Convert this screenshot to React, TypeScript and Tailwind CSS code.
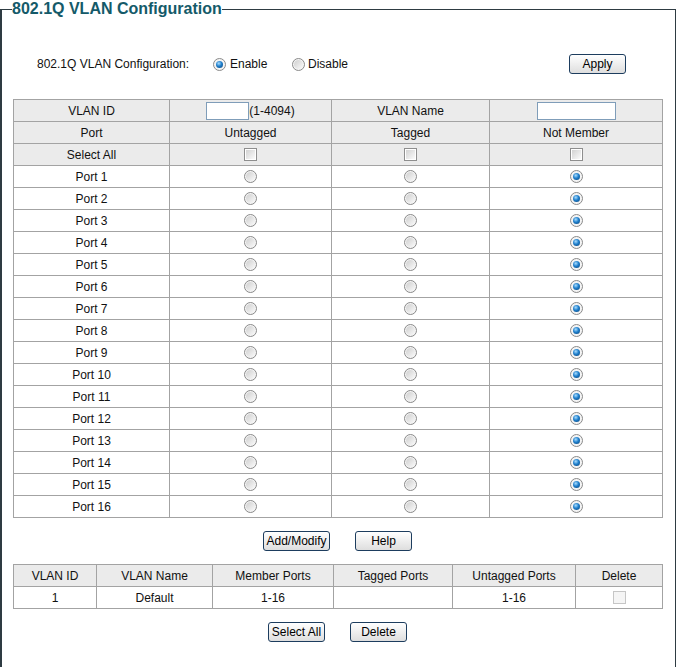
import React from 'react';

const ports = Array.from({ length: 16 }, (_, i) => `Port ${i + 1}`);

const Radio = ({ checked }: { checked?: boolean }) => (
  <span className="mx-auto flex h-[13px] w-[13px] shrink-0 items-center justify-center rounded-full border border-[#8a8a8a] bg-[#f4f4f4]">
    {checked ? (
      <span className="h-[7px] w-[7px] rounded-full bg-[radial-gradient(circle_at_40%_35%,#a9ddff_0%,#1f7fcc_45%,#083f73_100%)]" />
    ) : (
      <span className="h-[9px] w-[9px] rounded-full bg-gradient-to-br from-[#cfcfcf] to-[#fafafa]" />
    )}
  </span>
);

const Checkbox = ({ faint }: { faint?: boolean }) =>
  faint ? (
    <span className="mx-auto block h-[13px] w-[13px] border border-[#c6c6c6] bg-[#f5f5f5]" />
  ) : (
    <span className="mx-auto flex h-[13px] w-[13px] border border-[#8e8e8e] bg-white p-px">
      <span className="h-full w-full bg-gradient-to-br from-[#d2d2d2] to-[#fbfbfb]" />
    </span>
  );

const Btn = ({ children, className }: { children: React.ReactNode; className: string }) => (
  <button
    className={`h-[20px] rounded-[3px] border border-[#1d3d5e] bg-gradient-to-b from-white to-[#dedede] text-[12px] leading-none text-black ${className}`}
  >
    {children}
  </button>
);

const cell = 'border border-[#a3a3a3] p-0 text-center align-middle';

export default function App() {
  return (
    <div className="min-h-screen bg-white font-['Liberation_Sans',Arial,sans-serif] text-[12px] text-[#111]">
      <fieldset className="w-[676px] border-t border-r border-b border-l-2 border-[#2e3b42] pl-[10px] pb-[40px]">
        <legend className="p-0 text-[16px] font-bold leading-[18px] text-[#145a69]">802.1Q VLAN Configuration</legend>

        <div className="ml-px w-[649px]">
          <div className="mt-[36px] flex h-[20px] items-center pl-[24px]">
            <div className="w-[176px]">802.1Q VLAN Configuration:</div>
            <div className="flex w-[79px] items-center gap-[4px]">
              <span className="flex">
                <Radio checked />
              </span>
              <span>Enable</span>
            </div>
            <div className="flex items-center gap-[3px]">
              <span className="flex">
                <Radio />
              </span>
              <span>Disable</span>
            </div>
            <Btn className="ml-auto mr-[36px] w-[57px]">Apply</Btn>
          </div>

          <table className="mt-[25px] w-[649px] table-fixed border-collapse">
            <colgroup>
              <col className="w-[156px]" />
              <col className="w-[162px]" />
              <col className="w-[158px]" />
              <col className="w-[173px]" />
            </colgroup>
            <tbody>
              <tr className="h-[22px] bg-[#ebebeb]">
                <td className={cell}>VLAN ID</td>
                <td className={cell}>
                  <span className="inline-flex items-center">
                    <input className="h-[18px] w-[43px] border border-[#7f9db9] bg-white px-1 text-[12px] outline-none" />
                    <span>(1-4094)</span>
                  </span>
                </td>
                <td className={cell}>VLAN Name</td>
                <td className={cell}>
                  <input className="h-[18px] w-[79px] border border-[#7f9db9] bg-white px-1 align-middle text-[12px] outline-none" />
                </td>
              </tr>
              <tr className="h-[22px] bg-[#ebebeb]">
                <td className={cell}>Port</td>
                <td className={cell}>Untagged</td>
                <td className={cell}>Tagged</td>
                <td className={cell}>Not Member</td>
              </tr>
              <tr className="h-[22px] bg-[#ebebeb]">
                <td className={cell}>Select All</td>
                <td className={cell}>
                  <Checkbox />
                </td>
                <td className={cell}>
                  <Checkbox />
                </td>
                <td className={cell}>
                  <Checkbox />
                </td>
              </tr>
              {ports.map((p) => (
                <tr key={p} className="h-[22px] bg-white">
                  <td className={cell}>{p}</td>
                  <td className={cell}>
                    <Radio />
                  </td>
                  <td className={cell}>
                    <Radio />
                  </td>
                  <td className={cell}>
                    <Radio checked />
                  </td>
                </tr>
              ))}
            </tbody>
          </table>

          <div className="mt-[13px] flex justify-center gap-[25px]">
            <Btn className="w-[67px]">Add/Modify</Btn>
            <Btn className="w-[57px]">Help</Btn>
          </div>

          <table className="mt-[13px] w-[649px] table-fixed border-collapse">
            <colgroup>
              <col className="w-[83px]" />
              <col className="w-[116px]" />
              <col className="w-[121px]" />
              <col className="w-[119px]" />
              <col className="w-[123px]" />
              <col className="w-[87px]" />
            </colgroup>
            <tbody>
              <tr className="h-[22px] bg-[#ebebeb]">
                <td className={cell}>VLAN ID</td>
                <td className={cell}>VLAN Name</td>
                <td className={cell}>Member Ports</td>
                <td className={cell}>Tagged Ports</td>
                <td className={cell}>Untagged Ports</td>
                <td className={cell}>Delete</td>
              </tr>
              <tr className="h-[22px] bg-white">
                <td className={cell}>1</td>
                <td className={cell}>Default</td>
                <td className={cell}>1-16</td>
                <td className={cell}></td>
                <td className={cell}>1-16</td>
                <td className={cell}>
                  <Checkbox faint />
                </td>
              </tr>
            </tbody>
          </table>

          <div className="mt-[13px] flex justify-center gap-[25px]">
            <Btn className="w-[57px]">Select All</Btn>
            <Btn className="w-[57px]">Delete</Btn>
          </div>
        </div>
      </fieldset>
    </div>
  );
}
